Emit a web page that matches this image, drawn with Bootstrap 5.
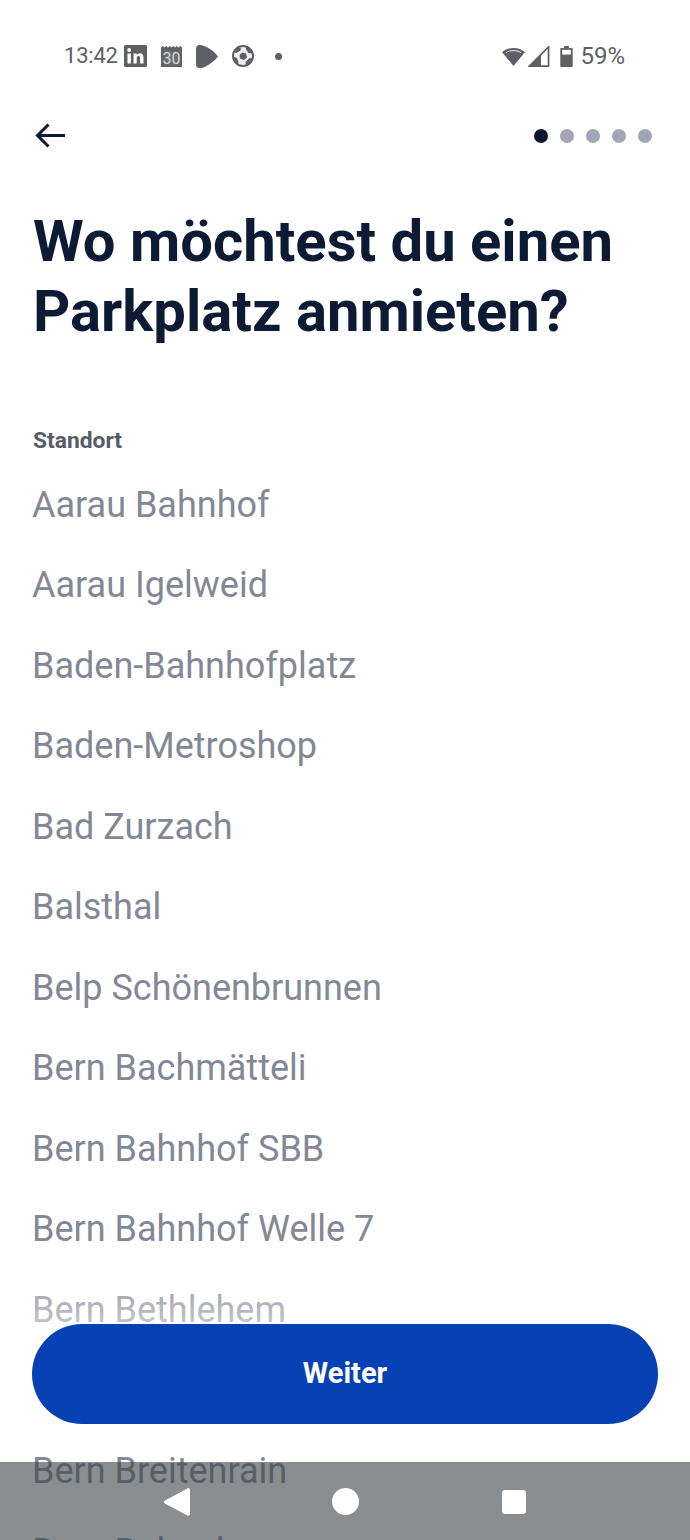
<!DOCTYPE html>
<html lang="de"><head><meta charset="utf-8"><title>Standort</title>
<link href="https://cdn.jsdelivr.net/npm/bootstrap@5.3.0/dist/css/bootstrap.min.css" rel="stylesheet">
<style>
html,body{height:1540px;overflow:hidden;background:#fff;font-family:Roboto,"Liberation Sans",sans-serif}
.screen{width:690px;height:1540px;overflow:hidden;position:relative;padding:0 33px}
.statusline{height:111px;padding:40px 32px 0 31px;color:#5f6064;font-size:24px;line-height:32px}
.statusline svg{display:block;flex:none}
.clocktext{font-size:22px;letter-spacing:-.2px;width:53px;white-space:nowrap}
.sic-a{margin-left:7px}.sic-b{margin-left:14px}.sic-c{margin-left:14px}.sic-d{margin-left:14px}
.sic-dot{width:7px;height:7px;margin-left:21px;background:#5f6064}
.sig-bars{margin-left:3px}.sig-batt{margin-left:10px}.sig-pct{margin-left:7px}
.topline{height:50px}
.stepdot{width:14px;height:14px;border-radius:50%;background:#a3a6b1}
.stepdot-on{background:#0a1730}
.steps{gap:12px;margin-right:5px}
.headline{font-size:58px;font-weight:700;line-height:69.500px;color:#0d1a33;margin:46px 0 0}
.fieldlabel{font-size:22.800px;font-weight:700;color:#565b68;line-height:28px;margin:80.500px 0 10px}
.placelist{margin:0 0 0 -1px;padding:0;list-style:none}
.placelist li{font-size:36px;line-height:80.550px;color:#838896;white-space:nowrap}
.fadeband{position:absolute;left:0;right:0;top:1250px;height:174px;background:linear-gradient(rgba(255,255,255,0) 0,rgba(255,255,255,.55) 80px,#fff 90px)}
.gobtn{position:absolute;left:32px;width:626px;top:1324px;height:100px;border-radius:50px;background:#0641b4;border:0;color:#fff;font-size:29px;font-weight:700}
.gobtn:hover{background:#0641b4;color:#fff}
.navstrip{position:absolute;left:0;right:0;top:1462px;height:78px;background:rgba(60,66,70,.6);padding-top:1px}
.nv-back{margin-right:142px}
.nv-home{width:27px;height:27px}
.nv-recent{width:24px;height:24px;border-radius:3px;margin-left:143px}
</style></head><body>
<div class="screen">
  <div class="statusline d-flex justify-content-between align-items-start">
    <div class="d-flex align-items-center">
      <span class="clocktext">13:42</span>
      <svg class="sic-a" width="23" height="22" viewBox="0 0 23 22"><rect width="23" height="22" rx="1.500" fill="#5f6064"/><rect x="3.500" y="8.500" width="3.400" height="10" fill="#fff"/><circle cx="5.200" cy="5" r="2" fill="#fff"/><path d="M9.500 8.500h3.200V10c.7-1.100 1.800-1.800 3.200-1.800 2.600 0 3.600 1.700 3.600 4.300v6h-3.400v-5.300c0-1.400-.4-2.300-1.600-2.300s-1.800 1-1.800 2.300v5.300H9.500z" fill="#fff"/></svg>
      <svg class="sic-b" width="21" height="21" viewBox="0 0 21 21"><path d="M0 1.500l1.750-1.500 1.750 1.500L5.250 0 7 1.500 8.750 0l1.750 1.500L12.250 0 14 1.500 15.750 0l1.750 1.500L19.250 0 21 1.500V21H0z" fill="#5f6064"/><rect x="2" y="5" width="17" height="14" fill="#6b6c70"/><text x="10.500" y="17.800" font-size="16" text-anchor="middle" fill="#d6d6d8" font-family="Roboto">30</text></svg>
      <svg class="sic-c" width="22" height="23" viewBox="0 0 22 23"><path d="M0 4C0 1.500 1.200 0 3.500 0c2 0 4 .6 6 1.600C14.500 4 19 7.500 22 11.500 19 15.500 14.500 19 9.500 21.400c-2 1-4 1.600-6 1.600C1.200 23 0 21.500 0 19z" fill="#5f6064"/></svg>
      <svg class="sic-d" width="22" height="22" viewBox="0 0 22 22"><circle cx="11" cy="11" r="10" fill="#eeeeef" stroke="#5f6064" stroke-width="2"/><path d="M10 7.500l4 1 1 4-3 2.500-4-1.500-.5-3.500zM5 2.500l4 .5-.5 2.500-4 2.500-2-.5zM14 1.500l5 3 1 4-3.500-.5-2.500-3.500zM2 12l3 1 1.500 4-1 2.500L2 16zM17.500 13l3 .5-2 5-4.500 2-.5-3.500z" fill="#5f6064"/></svg>
      <span class="d-block rounded-circle sic-dot"></span>
    </div>
    <div class="d-flex align-items-center">
      <svg width="23" height="19" viewBox="0 0 24 20"><path d="M0 5.500C3 2.500 7 1 12 1s9 1.500 12 4.500L12 20z" fill="#5f6064"/><path d="M4 6c2.300-1.500 5-2.200 8-2.200s5.700.7 8 2.200" fill="none" stroke="#fff" stroke-width="1"/></svg>
      <svg class="sig-bars" width="22" height="21" viewBox="0 0 22 22"><path d="M21 1v20H1z" fill="none" stroke="#5f6064" stroke-width="1.800"/><path d="M13 9v12H1z" fill="#5f6064"/></svg>
      <svg class="sig-batt" width="13" height="21" viewBox="0 0 13 22"><path d="M4 0h5v2h3a1 1 0 0 1 1 1v18a1 1 0 0 1-1 1H1a1 1 0 0 1-1-1V3a1 1 0 0 1 1-1h3z" fill="#5f6064"/><rect x="2" y="4" width="9" height="5" fill="#fff"/></svg>
      <span class="sig-pct">59%</span>
    </div>
  </div>
  <div class="topline d-flex justify-content-between align-items-center">
    <svg width="34" height="28" viewBox="0 0 34 28"><path d="M32 13.500H4.500M15.500 2.500L4.500 13.500l11 11" fill="none" stroke="#0d1a33" stroke-width="3"/></svg>
    <div class="steps d-flex"><span class="stepdot stepdot-on"></span><span class="stepdot"></span><span class="stepdot"></span><span class="stepdot"></span><span class="stepdot"></span></div>
  </div>
  <h1 class="headline">Wo möchtest du einen Parkplatz anmieten?</h1>
  <p class="fieldlabel">Standort</p>
  <ul class="placelist">
    <li>Aarau Bahnhof</li><li>Aarau Igelweid</li><li>Baden-Bahnhofplatz</li><li>Baden-Metroshop</li><li>Bad Zurzach</li><li>Balsthal</li><li>Belp Schönenbrunnen</li><li>Bern Bachmätteli</li><li>Bern Bahnhof SBB</li><li>Bern Bahnhof Welle 7</li><li>Bern Bethlehem</li><li>Bern Bolligen</li><li>Bern Breitenrain</li><li>Bern Bubenberg</li>
  </ul>
  <div class="fadeband"></div>
  <button class="btn gobtn" type="button">Weiter</button>
  <div class="navstrip d-flex align-items-center justify-content-center">
    <svg class="nv-back" width="26" height="28" viewBox="0 0 26 28"><path d="M26 2v24c0 1.500-1.500 2.200-2.700 1.400L1 15.500c-1.300-.7-1.300-2.300 0-3L23.300.6C24.500-.2 26 .5 26 2z" fill="#fff"/></svg>
    <span class="d-block rounded-circle bg-white nv-home"></span>
    <span class="d-block bg-white nv-recent"></span>
  </div>
</div>
</body></html>
